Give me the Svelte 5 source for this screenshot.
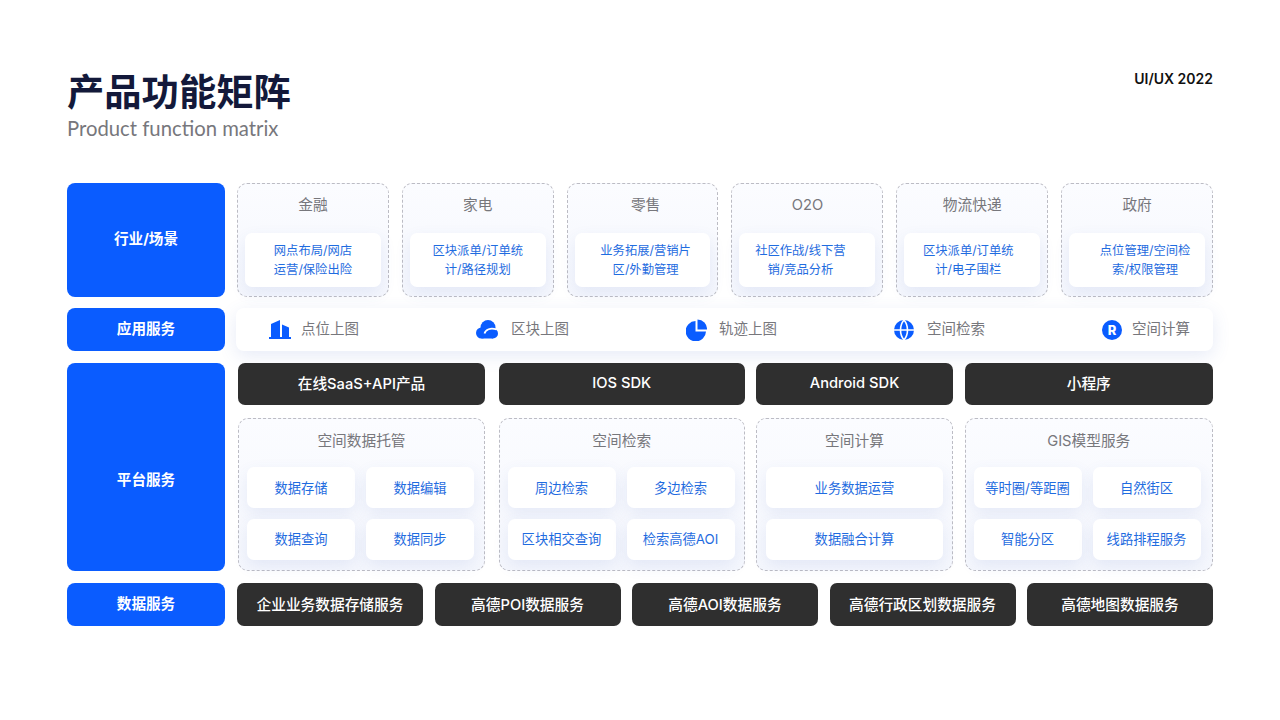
<script lang="ts">
    // shift: nudges the text off centre, the source cards are not evenly aligned
    const scenes = [
        { title: '金融', shift: 0, titleShift: 0, lines: ['网点布局/网店', '运营/保险出险'] },
        { title: '家电', shift: 0, titleShift: 0, lines: ['区块派单/订单统', '计/路径规划'] },
        { title: '零售', shift: 3, titleShift: 3, lines: ['业务拓展/营销片', '区/外勤管理'] },
        { title: 'O2O', shift: -7, titleShift: 0, lines: ['社区作战/线下营', '销/竞品分析'] },
        { title: '物流快递', shift: -4, titleShift: 0, lines: ['区块派单/订单统', '计/电子围栏'] },
        { title: '政府', shift: 8, titleShift: 0, lines: ['点位管理/空间检', '索/权限管理'] }
    ];

    const apps = [
        { icon: 'building', label: '点位上图', size: 22, gap: 10 },
        { icon: 'cloud', label: '区块上图', size: 22, gap: 13 },
        { icon: 'pie', label: '轨迹上图', size: 21, gap: 12 },
        { icon: 'globe', label: '空间检索', size: 20, gap: 13 },
        { icon: 'r', label: '空间计算', size: 20, gap: 10 }
    ];

    const products = ['在线SaaS+API产品', 'IOS SDK', 'Android SDK', '小程序'];

    const groups = [
        { title: '空间数据托管', wide: false, items: ['数据存储', '数据编辑', '数据查询', '数据同步'] },
        { title: '空间检索', wide: false, items: ['周边检索', '多边检索', '区块相交查询', '检索高德AOI'] },
        { title: '空间计算', wide: true, items: ['业务数据运营', '数据融合计算'] },
        { title: 'GIS模型服务', wide: false, items: ['等时圈/等距圈', '自然街区', '智能分区', '线路排程服务'] }
    ];

    const dataServices = [
        '企业业务数据存储服务',
        '高德POI数据服务',
        '高德AOI数据服务',
        '高德行政区划数据服务',
        '高德地图数据服务'
    ];
</script>

<main class="page">
    <header class="head">
        <div>
            <h1>产品功能矩阵</h1>
            <p>Product function matrix</p>
        </div>
        <span class="tag">UI/UX 2022</span>
    </header>

    <section class="matrix">
        <div class="label">行业/场景</div>
        <div class="scenes">
            {#each scenes as s}
                <div class="box scene">
                    <div class="box-title" style:padding-left="{s.titleShift * 2}px">{s.title}</div>
                    <div
                        class="tile scene-tile"
                        style:padding-left="{Math.max(s.shift, 0) * 2}px"
                        style:padding-right="{Math.max(-s.shift, 0) * 2}px"
                    >
                        {#each s.lines as line}<div>{line}</div>{/each}
                    </div>
                </div>
            {/each}
        </div>

        <div class="label">应用服务</div>
        <div class="apps">
            {#each apps as a}
                <div class="app" style:gap="{a.gap}px">
                    <svg width={a.size} height="22" viewBox="0 0 {a.size} 22" aria-hidden="true">
                        {#if a.icon === 'building'}
                            <path d="M2 18V5L11 1V18zM13 18V5.500L20 8.500V18zM0 18h22v2H0z" fill="#0a5cff" />
                        {:else if a.icon === 'cloud'}
                            <circle cx="12" cy="8.500" r="7.500" fill="#0a5cff" />
                            <circle cx="5.500" cy="14" r="5.500" fill="#0a5cff" />
                            <circle cx="17" cy="14.500" r="5" fill="#0a5cff" />
                            <rect x="5.500" y="12" width="11.500" height="7.500" fill="#0a5cff" />
                            <path d="M8.500 14.500C9.500 10.500 14.500 8.500 20.500 10.500" fill="none" stroke="#fff" stroke-width="1.800" />
                        {:else if a.icon === 'pie'}
                            <path d="M9.500 2V12.500H20A10.200 10.200 0 1 1 9.500 2z" fill="#0a5cff" />
                            <path d="M11.500 0.500A9.500 9.500 0 0 1 21 10.500H11.500z" fill="#0a5cff" />
                        {:else if a.icon === 'globe'}
                            <circle cx="10" cy="11" r="10" fill="#0a5cff" />
                            <path d="M0 11h20M10 1c-2.500 3-3.500 6.300-3.500 10s1 7 3.500 10c2.500-3 3.500-6.300 3.500-10s-1-7-3.500-10z" fill="none" stroke="#fff" stroke-width="1.600" />
                        {:else}
                            <circle cx="10" cy="11" r="10" fill="#0a5cff" />
                            <text class="r-mark" x="10" y="15.800" text-anchor="middle">R</text>
                        {/if}
                    </svg>
                    <span>{a.label}</span>
                </div>
            {/each}
        </div>

        <div class="label platform-label">平台服务</div>
        <div class="platform">
            {#each products as p}
                <div class="dark">{p}</div>
            {/each}
            {#each groups as g}
                <div class="box group" class:wide={g.wide}>
                    <div class="box-title">{g.title}</div>
                    <div class="tiles">
                        {#each g.items as item}
                            <div class="tile">{item}</div>
                        {/each}
                    </div>
                </div>
            {/each}
        </div>

        <div class="label">数据服务</div>
        <div class="data">
            {#each dataServices as d}
                <div class="dark">{d}</div>
            {/each}
        </div>
    </section>
</main>

<style>
    :global(body) {
        margin: 0;
        background: #fff;
    }

    .page {
        width: 1280px;
        height: 720px;
        box-sizing: border-box;
        padding: 67px 67px 0;
        font-family: 'Inter', 'Noto Sans CJK SC', sans-serif;
        overflow: hidden;
    }

    .head {
        display: flex;
        justify-content: space-between;
        align-items: flex-start;
        height: 116px;
    }

    h1 {
        margin: 0;
        font-family: 'Noto Sans CJK SC', sans-serif;
        font-size: 37.300px;
        line-height: 46px;
        font-weight: 700;
        color: #13193a;
    }

    .head p {
        margin: 3px 0 0;
        font-family: 'Lato', sans-serif;
        font-size: 20.300px;
        line-height: 24px;
        color: #77777c;
    }

    .tag {
        margin-top: 2px;
        font-size: 14px;
        line-height: 20px;
        font-weight: 600;
        color: #111;
    }

    .matrix {
        display: grid;
        grid-template-columns: 158px 1fr;
        grid-template-rows: 114px 43px 209px 44px;
        column-gap: 12px;
        row-gap: 11px;
    }

    /* the two lower rows sit a pixel further down than the row gap gives */
    .matrix > :nth-child(n + 5) {
        margin-top: 1px;
    }

    .label {
        display: flex;
        align-items: center;
        justify-content: center;
        padding-bottom: 5px;
        box-sizing: border-box;
        background: #0a5cff;
        border-radius: 8px;
        color: #fff;
        font-size: 14.600px;
        font-weight: 700;
    }

    .platform-label {
        padding: 22px 0 0;
    }

    .scenes {
        display: grid;
        grid-template-columns: repeat(6, 1fr);
        column-gap: 13px;
    }

    .box {
        box-sizing: border-box;
        border: 1px dashed #bcbcc4;
        border-radius: 10px;
        background: linear-gradient(180deg, #fbfcff 0%, #f5f7fd 100%);
        min-width: 0;
    }

    .box-title {
        text-align: center;
        font-size: 14.700px;
        line-height: 20px;
        color: #77777c;
    }

    .scene {
        padding: 11px 7px 0;
    }

    .tile {
        display: flex;
        align-items: center;
        justify-content: center;
        padding-bottom: 1px;
        box-sizing: border-box;
        background: #fff;
        border-radius: 7px;
        box-shadow: 0 6px 16px rgba(70, 100, 190, 0.1);
        color: #1f6ce0;
        font-size: 13.300px;
    }

    .scene-tile {
        flex-direction: column;
        height: 54px;
        margin-top: 18px;
        font-size: 12.300px;
        line-height: 19px;
    }

    .apps {
        display: flex;
        align-items: center;
        justify-content: space-between;
        margin-left: -1px;
        padding: 0 23px 0 33px;
        background: #fff;
        border-radius: 8px;
        box-shadow: 0 5px 18px rgba(70, 100, 190, 0.13);
    }

    .app {
        display: flex;
        align-items: center;
        font-size: 14.500px;
        color: #77777c;
    }

    .app span {
        margin-bottom: 4px;
    }

    .r-mark {
        font-size: 13px;
        font-weight: 800;
        fill: #fff;
    }

    /* the source gaps differ slightly, so the gaps are tracks of their own */
    .platform {
        display: grid;
        grid-template-columns: 1px 247px 13.500px 246.500px 11px 197px 11.500px 248.500px;
        grid-template-rows: 42px 153px;
        row-gap: 13px;
    }

    .platform > :nth-child(4n + 1) {
        grid-column: 2;
    }

    .platform > :nth-child(4n + 2) {
        grid-column: 4;
    }

    .platform > :nth-child(4n + 3) {
        grid-column: 6;
    }

    .platform > :nth-child(4n) {
        grid-column: 8;
    }

    .dark {
        display: flex;
        align-items: center;
        justify-content: center;
        padding-bottom: 3px;
        box-sizing: border-box;
        background: #2f2f2f;
        border-radius: 7px;
        color: #fff;
        font-size: 14.700px;
        font-weight: 500;
    }

    .group {
        padding: 12px 8px 0;
    }

    .group.wide {
        padding: 12px 9px 0;
    }

    .tiles {
        display: grid;
        grid-template-columns: 108px 108px;
        grid-auto-rows: 41px;
        column-gap: 11px;
        row-gap: 11px;
        margin-top: 16px;
    }

    .tiles > :nth-child(n + 3),
    .wide .tiles > :nth-child(2) {
        padding-bottom: 3px;
    }

    .wide .tiles {
        grid-template-columns: 1fr;
    }

    .data {
        display: grid;
        grid-template-columns: repeat(5, 1fr);
        column-gap: 11.500px;
    }
</style>
